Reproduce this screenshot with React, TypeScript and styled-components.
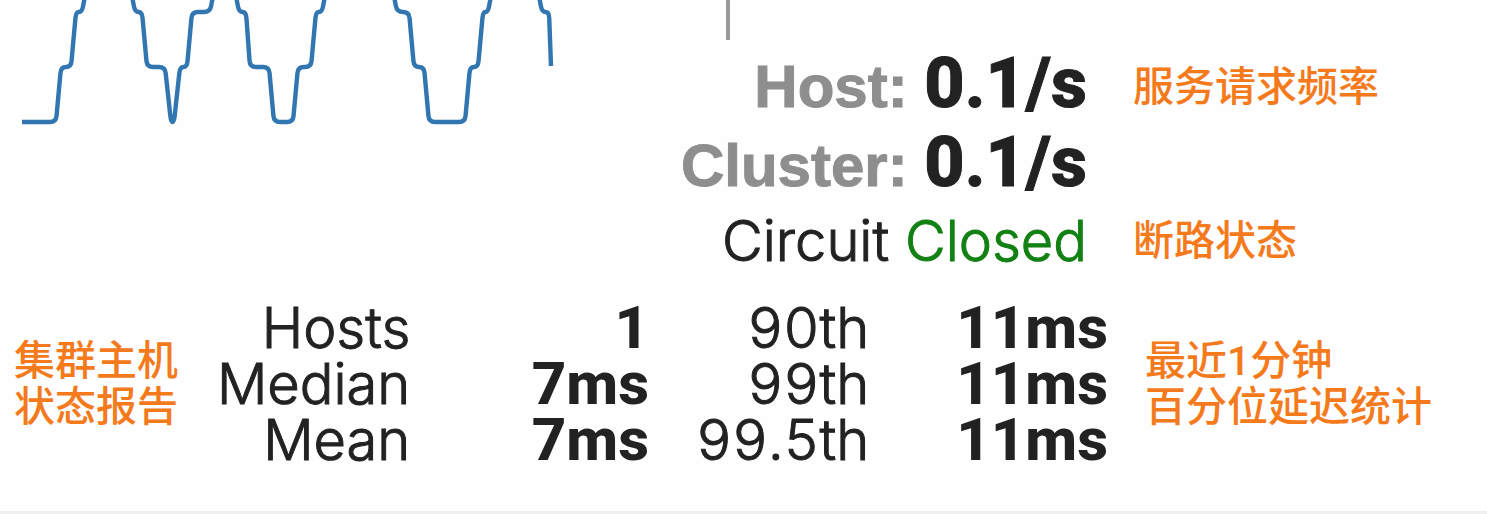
import React from "react";
import styled, { createGlobalStyle } from "styled-components";

const GlobalStyle = createGlobalStyle`
  * { box-sizing: border-box; }
  body {
    margin: 0;
    background: #fefefe;
    color: #222;
    font-family: Inter, "Liberation Sans", "Noto Sans CJK SC", sans-serif;
  }
`;

const Monitor = styled.main`
  border-bottom: 3px solid #efefef;
  padding-bottom: 43px;
`;

const Overview = styled.section`
  display: grid;
  grid-template-columns: 560fr 927fr;
  align-items: start;
`;

const Chart = styled.svg`
  display: block;
  width: 100%;
  height: auto;
`;

const Rates = styled.div`
  display: grid;
  grid-template-columns: 527fr 400fr;
  align-items: center;
`;

const AxisCell = styled.div`
  grid-column: 1 / -1;
  height: 47px;
  padding-left: 166px;
`;

const AxisMark = styled.div`
  width: 4px;
  height: 40px;
  background: #999;
`;

const Rate = styled.div`
  text-align: right;
  white-space: nowrap;
  font-family: "Liberation Sans", Arial, sans-serif;
  font-size: 60px;
  font-weight: 700;
  line-height: 79px;
  color: #8e8e8e;
  -webkit-text-stroke: 1px currentColor;
`;

const RateValue = styled.strong`
  font-family: Roboto, sans-serif;
  font-size: 70px;
  font-weight: 800;
  line-height: 1;
  color: #222;
`;

const Circuit = styled.div`
  text-align: right;
  white-space: nowrap;
  font-size: 56px;
  font-weight: 300;
  line-height: 72px;
  -webkit-text-stroke: 1px currentColor;
`;

const CircuitState = styled.span`
  color: #138013;
`;

const Note = styled.p<{ $indent: number }>`
  margin: 0;
  padding-left: ${(p) => p.$indent}px;
  white-space: nowrap;
  font-family: Roboto, "Noto Sans CJK SC", sans-serif;
  font-size: 41px;
  font-weight: 500;
  line-height: 46px;
  color: #f47a1c;
`;

const Details = styled.section`
  display: grid;
  grid-template-columns: 190fr 918fr 379fr;
  align-items: center;
  margin-top: 23px;
`;

const Stats = styled.table`
  width: 100%;
  table-layout: fixed;
  border-collapse: collapse;
  font-size: 56px;
  line-height: 56px;
`;

const Label = styled.th`
  padding: 0;
  text-align: right;
  white-space: nowrap;
  font-weight: 300;
  font-variant-numeric: tabular-nums;
  -webkit-text-stroke: 1px currentColor;
`;

const Value = styled.td`
  padding: 0;
  text-align: right;
  white-space: nowrap;
  font-family: Roboto, sans-serif;
  font-size: 60px;
  font-weight: 800;
`;

type Point = [number, number];

const traces: Point[][] = [
  [[22, 122], [56, 122], [61, 67], [71, 67], [76, 12], [82, 12], [85, -4]],
  [[132, -4], [135, 12], [142, 12], [147, 67], [165, 67], [171, 122], [174, 122], [180, 67], [187, 67], [192, 12], [210, 12], [213, -4]],
  [[236, -4], [239, 12], [246, 12], [250, 67], [269, 67], [274, 122], [293, 122], [298, 67], [311, 67], [316, 12], [322, 12], [325, -4]],
  [[394, -4], [397, 12], [409, 12], [414, 67], [424, 67], [429, 122], [465, 122], [470, 67], [478, 67], [483, 12], [488, 12], [491, -4]],
  [[539, -4], [542, 12], [549, 12], [551, 66]],
];

// Polyline with each corner eased by a short quadratic curve.
function smooth(points: Point[]): string {
  const toward = (a: Point, b: Point, r: number): string => {
    const len = Math.hypot(b[0] - a[0], b[1] - a[1]);
    const t = Math.min(r, len / 2) / len;
    return `${a[0] + (b[0] - a[0]) * t} ${a[1] + (b[1] - a[1]) * t}`;
  };
  let d = `M${points[0].join(" ")}`;
  for (let i = 1; i < points.length - 1; i++) {
    const p = points[i];
    d += `L${toward(p, points[i - 1], 6)}Q${p.join(" ")} ${toward(p, points[i + 1], 6)}`;
  }
  return d + `L${points[points.length - 1].join(" ")}`;
}

const rows = [
  ["Hosts", "1", "90th", "11ms"],
  ["Median", "7ms", "99th", "11ms"],
  ["Mean", "7ms", "99.5th", "11ms"],
];

const columns = ["24%", "26%", "24%", "26%"];

export default function App() {
  return (
    <>
      <GlobalStyle />
      <Monitor>
        <Overview>
          <Chart viewBox="0 0 560 130" role="img" aria-label="Request rate">
            {traces.map((t, i) => (
              <path key={i} d={smooth(t)} fill="none" stroke="#3276b1" strokeWidth="4.4" />
            ))}
          </Chart>
          <Rates>
            <AxisCell>
              <AxisMark />
            </AxisCell>
            <Rate>
              Host: <RateValue>0.1/s</RateValue>
            </Rate>
            <Note $indent={46}>服务请求频率</Note>
            <Rate>
              Cluster: <RateValue>0.1/s</RateValue>
            </Rate>
            <span />
            <Circuit>
              Circuit <CircuitState>Closed</CircuitState>
            </Circuit>
            <Note $indent={46}>断路状态</Note>
          </Rates>
        </Overview>
        <Details>
          <Note $indent={14}>
            集群主机
            <br />
            状态报告
          </Note>
          <Stats>
            <colgroup>
              {columns.map((width, i) => (
                <col key={i} style={{ width }} />
              ))}
            </colgroup>
            <tbody>
              {rows.map(([name, value, percentile, latency]) => (
                <tr key={name}>
                  <Label scope="row">{name}</Label>
                  <Value>{value}</Value>
                  <Label scope="row">{percentile}</Label>
                  <Value>{latency}</Value>
                </tr>
              ))}
            </tbody>
          </Stats>
          <Note $indent={37}>
            最近1分钟
            <br />
            百分位延迟统计
          </Note>
        </Details>
      </Monitor>
    </>
  );
}
